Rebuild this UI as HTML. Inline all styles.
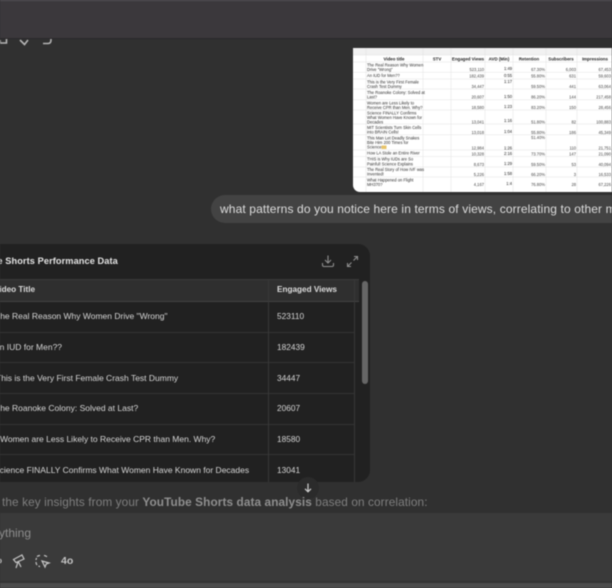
<!DOCTYPE html>
<html><head><meta charset="utf-8">
<style>
html,body{margin:0;padding:0;background:#303030}
#w{position:relative;width:612px;height:588px;overflow:hidden;background:#303030;font-family:"Liberation Sans",sans-serif;filter:blur(.45px)}
#w div,#w span,#w svg{position:absolute}
.t{white-space:nowrap;color:#d6d6d6;font-size:8.500px;font-weight:400;letter-spacing:0;line-height:12px}
.n{left:277px;font-size:8.300px}
.r{left:0;width:354px;height:1px;background:#343434}
</style></head><body>
<div id="w">
<div style="left:0;top:0;width:612px;height:38px;background:#3b383c"></div>
<div style="left:0;top:0;width:612px;height:1px;background:#55525a"></div>
<div style="left:0;top:38px;width:612px;height:1px;background:#2a282b"></div>
<svg style="left:0;top:38px" width="70" height="10" viewBox="0 0 70 10" fill="none" stroke="#b4b4b4" stroke-width="1.600"><path d="M0 2V5H6.500V1"/><path d="M20 2L24.500 6.500L28 2"/><path d="M43 5.500H48C50.500 5.500 51 4 51 1"/></svg>

<svg style="left:353px;top:48px" width="259" height="144" viewBox="353 48 259 144" font-family="Liberation Sans" font-size="4.100" fill="#555">
<rect x="353" y="48" width="270" height="144" rx="7" fill="#fff"/>
<rect x="353" y="48" width="259" height="7" fill="#f1f1f1"/>
<g stroke="#dcdcdc" stroke-width=".4"><path d="M366 48V192M423 48V192M451 48V192M485 48V192M513 48V192M546 48V192M577 48V192"/><path d="M353 55H612M353 62H612M353 72.300H612M353 79H612M353 89H612M353 99.700H612M353 110H612M353 124H612M353 134.700H612M353 150H612M353 156.500H612M353 167H612M353 177H612"/></g>
<g font-weight="700" font-size="4.400" fill="#1c1c1c" text-anchor="middle"><text x="394" y="60.500">Video title</text><text x="437" y="60.500">STV</text><text x="468" y="60.500">Engaged Views</text><text x="499" y="60.500">AVD (Min)</text><text x="529" y="60.500">Retention</text><text x="561" y="60.500">Subscribers</text><text x="595" y="60.500">Impressions</text></g>
<g fill="#2c2c2c"><text x="367" y="66.500">The Real Reason Why Women</text><text x="367" y="71">Drive "Wrong"</text><text x="367" y="77">An IUD for Men??</text><text x="367" y="83.500">This is the Very First Female</text><text x="367" y="88">Crash Test Dummy</text><text x="367" y="94">The Roanoke Colony: Solved at</text><text x="367" y="98.500">Last?</text><text x="367" y="104.500">Women are Less Likely to</text><text x="367" y="109">Receive CPR than Men. Why?</text><text x="367" y="114.500">Science FINALLY Confirms</text><text x="367" y="119">What Women Have Known for</text><text x="367" y="123.500">Decades</text><text x="367" y="129">MIT Scientists Turn Skin Cells</text><text x="367" y="133.500">into BRAIN Cells!</text><text x="367" y="139.500">This Man Let Deadly Snakes</text><text x="367" y="144">Bite Him 200 Times for</text><text x="367" y="148.500">Science</text><text x="367" y="154.500">How LA Stole an Entire River</text><text x="367" y="160.500">THIS is Why IUDs are So</text><text x="367" y="165.500">Painful! Science Explains</text><text x="367" y="171">The Real Story of How IVF was</text><text x="367" y="175.500">Invented!</text><text x="367" y="181.500">What Happened on Flight</text><text x="367" y="186">MH370?</text></g>
<rect x="381.500" y="145.500" width="5" height="3.500" fill="#e8c46a"/>
<g text-anchor="end" fill="#444">
<text x="484" y="71">523,110</text><text x="512" y="70" fill="#222">1:49</text><text x="545" y="71">67.30%</text><text x="576" y="71">6,003</text><text x="611" y="71">67,453</text>
<text x="484" y="77.500">182,439</text><text x="512" y="77" fill="#222">0:55</text><text x="545" y="77.500">55.80%</text><text x="576" y="77.500">631</text><text x="611" y="77.500">59,603</text>
<text x="484" y="88">34,447</text><text x="512" y="83" fill="#222">1:17</text><text x="545" y="88">59.50%</text><text x="576" y="88">441</text><text x="611" y="88">63,064</text>
<text x="484" y="98.500">20,607</text><text x="512" y="98" fill="#222">1:50</text><text x="545" y="98.500">86.20%</text><text x="576" y="98.500">144</text><text x="611" y="98.500">217,458</text>
<text x="484" y="109">18,580</text><text x="512" y="108" fill="#222">1:23</text><text x="545" y="109">83.20%</text><text x="576" y="109">150</text><text x="611" y="109">28,456</text>
<text x="484" y="123.500">13,041</text><text x="512" y="122" fill="#222">1:16</text><text x="545" y="123.500">51.80%</text><text x="576" y="123.500">82</text><text x="611" y="123.500">100,883</text>
<text x="484" y="134">13,018</text><text x="512" y="133" fill="#222">1:04</text><text x="545" y="134">55.80%</text><text x="576" y="134">186</text><text x="611" y="134">45,349</text>
<text x="545" y="139">51.40%</text>
<text x="484" y="149.500">12,984</text><text x="512" y="149.500" fill="#222">1:26</text><text x="576" y="149.500">110</text><text x="611" y="149.500">21,751</text>
<text x="484" y="155.500">10,328</text><text x="512" y="155" fill="#222">2:16</text><text x="545" y="155.500">73.70%</text><text x="576" y="155.500">147</text><text x="611" y="155.500">21,090</text>
<text x="484" y="166">8,673</text><text x="512" y="165" fill="#222">1:29</text><text x="545" y="166">59.50%</text><text x="576" y="166">53</text><text x="611" y="166">40,094</text>
<text x="484" y="176">5,226</text><text x="512" y="175" fill="#222">1:58</text><text x="545" y="176">66.20%</text><text x="576" y="176">3</text><text x="611" y="176">16,533</text>
<text x="484" y="186">4,167</text><text x="512" y="185" fill="#222">1:4</text><text x="545" y="186">76.80%</text><text x="576" y="186">28</text><text x="611" y="186">67,226</text>
</g>
</svg>

<div style="left:211px;top:195px;width:440px;height:28px;border-radius:14px;background:#434343"></div>
<div class="t" style="left:220px;top:202px;font-size:12px;line-height:15px;color:#dedede;letter-spacing:.12px">what patterns do you notice here in terms of views, correlating to other metrics</div>

<div style="left:-20px;top:244px;width:390px;height:238px;border-radius:12px;background:#212121"></div>
<div class="t" style="left:-36px;top:255px;font-size:9.200px;font-weight:700;color:#e4e4e4;letter-spacing:.1px">YouTube Shorts Performance Data</div>
<svg style="left:321px;top:254px" width="14" height="14" viewBox="0 0 14 14" fill="none" stroke="#8f8f8f" stroke-width="1.100"><path d="M7 1.500V8.500M4 6L7 9L10 6M1.500 9V11C1.500 12 2 12.500 3 12.500H11C12 12.500 12.500 12 12.500 11V9"/></svg>
<svg style="left:346px;top:255px" width="13" height="13" viewBox="0 0 13 13" fill="none" stroke="#8f8f8f" stroke-width="1.100"><path d="M7.500 5.500L11 2M8 1.500H11.500V5M5.500 7.500L2 11M1.500 8V11.500H5"/></svg>

<div style="left:0;top:279px;width:359px;height:22px;background:#2f2f2f"></div>
<div class="r" style="top:279px;width:359px;background:#3a3a3a"></div>
<div class="r" style="top:301px;width:359px;background:#424242"></div>
<div class="r" style="top:332px"></div><div class="r" style="top:362px"></div><div class="r" style="top:393px"></div><div class="r" style="top:424px"></div><div class="r" style="top:454px"></div>
<div style="left:268px;top:279px;width:1px;height:203px;background:#383838"></div>
<div style="left:354px;top:279px;width:1px;height:203px;background:#383838"></div>
<div style="left:362px;top:281px;width:6px;height:103px;border-radius:3px;background:#666"></div>

<div class="t" style="left:-6px;top:284px;font-weight:700;font-size:8.200px;color:#dcdcdc">Video Title</div>
<div class="t n" style="top:284px;font-weight:700;font-size:8.200px;color:#dcdcdc">Engaged Views</div>
<div class="t" style="left:-5px;top:310px">The Real Reason Why Women Drive "Wrong"</div><div class="t n" style="top:310px">523110</div>
<div class="t" style="left:-6px;top:341px">An IUD for Men??</div><div class="t n" style="top:341px">182439</div>
<div class="t" style="left:-4px;top:372px">This is the Very First Female Crash Test Dummy</div><div class="t n" style="top:372px">34447</div>
<div class="t" style="left:-5px;top:402px">The Roanoke Colony: Solved at Last?</div><div class="t n" style="top:402px">20607</div>
<div class="t" style="left:0;top:433px">Women are Less Likely to Receive CPR than Men. Why?</div><div class="t n" style="top:433px">18580</div>
<div class="t" style="left:-6px;top:464px">Science FINALLY Confirms What Women Have Known for Decades</div><div class="t n" style="top:464px">13041</div>

<div style="left:297px;top:477px;width:22px;height:22px;border-radius:11px;background:#2b2b2b"></div>
<svg style="left:302px;top:482px" width="12" height="12" viewBox="0 0 12 12" fill="none" stroke="#d0d0d0" stroke-width="1.200"><path d="M6 1.500V9.500M3 6.800L6 9.800L9 6.800"/></svg>

<div class="t" style="left:2px;top:495px;font-size:11.800px;line-height:15px;color:#7f7f7f;letter-spacing:.1px">the key insights from your <b style="color:#8f8f8f">YouTube Shorts data analysis</b> based on correlation:</div>

<div style="left:0;top:513px;width:612px;height:68px;background:#3a3a3a"></div>
<div style="left:0;top:581px;width:612px;height:2px;background:#343434"></div>
<div style="left:0;top:583px;width:612px;height:5px;background:#4c4c4c"></div>
<div class="t" style="left:-1px;top:526px;font-size:12px;line-height:15px;color:#8e8e8e">ything</div>
<svg style="left:0;top:553px" width="60" height="16" viewBox="0 0 60 16" fill="none" stroke="#c4c4c4" stroke-width="1.200"><path d="M0 6C1.500 7 1.500 9 0 10"/><path d="M13.500 6.500L22 2L24 6L16 9.500ZM18 9L16 15M18.500 9L21 14"/><path d="M37 3.500C38 2.800 39 2.500 40 2.500M44 2.500C45 2.500 46 3 47 3.700M37 12C36.200 11 36 10 36 9M36 7C36 6 36.300 5.500 36.700 5M40 13.500C39.500 13.500 39 13.300 38.500 13"/><path d="M42 8L49 10L46.200 11L45 14Z"/></svg>
<div class="t" style="left:61px;top:554px;font-size:10.500px;font-weight:700;color:#c4c4c4;line-height:14px">4o</div>
</div>
</body></html>
